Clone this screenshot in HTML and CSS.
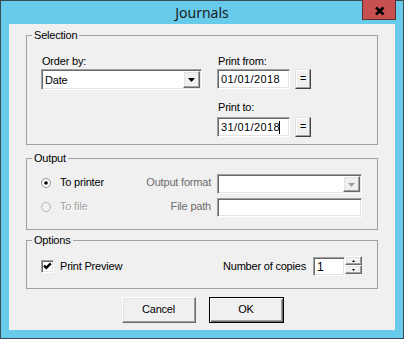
FILE: index.html
```html
<!DOCTYPE html>
<html>
<head>
<meta charset="utf-8">
<link rel="stylesheet" href="styles.css">
</head>
<body>
<div class="window">
  <div class="titlebar">
    <span class="title">Journals</span>
    <div class="close">
      <svg width="34" height="20" viewBox="0 0 34 20"><path d="M14 8.5 L21.5 15.5 M21.5 8.5 L14 15.5" stroke="#000" stroke-width="2.6" fill="none"/></svg>
    </div>
  </div>
  <div class="client">
    <div class="group group-sel">
      <div class="gtitle">Selection</div>
      <div class="sel-body">
        <div class="col">
          <div class="lbl">Order by:</div>
          <div class="combo combo-order">
            <span class="cval">Date</span>
            <span class="ddbtn"><svg width="7" height="4" viewBox="0 0 7 4"><path d="M0 0 H7 L3.5 4 Z" fill="#000"/></svg></span>
          </div>
        </div>
        <div class="col">
          <div class="lbl">Print from:</div>
          <div class="daterow first">
            <div class="field date">01/01/2018</div>
            <div class="rbtn eq">=</div>
          </div>
          <div class="lbl lbl-to">Print to:</div>
          <div class="daterow second">
            <div class="field date">31/01/2018<span class="caret"></span></div>
            <div class="rbtn eq">=</div>
          </div>
        </div>
      </div>
    </div>

    <div class="group group-out">
      <div class="gtitle">Output</div>
      <div class="out-body">
        <div class="radio-cell">
          <svg class="radio" width="12" height="12" viewBox="0 0 12 12"><circle cx="5" cy="6" r="4.5" fill="#fff" stroke="#8c8c8c"/><circle cx="5" cy="6" r="1.8" fill="#000"/></svg>
          <span>To printer</span>
        </div>
        <div class="olabel">Output format</div>
        <div class="combo combo-fmt">
          <span class="cval"></span>
          <span class="ddbtn"><svg width="7" height="4" viewBox="0 0 7 4"><path d="M0 0 H7 L3.5 4 Z" fill="#a0a0a0"/></svg></span>
        </div>
        <div class="radio-cell disabled">
          <svg class="radio" width="12" height="12" viewBox="0 0 12 12"><circle cx="5" cy="6" r="4.5" fill="#f0f0f0" stroke="#b4b4b4"/></svg>
          <span>To file</span>
        </div>
        <div class="olabel">File path</div>
        <div class="field path"></div>
      </div>
    </div>

    <div class="group group-opt">
      <div class="gtitle">Options</div>
      <div class="opt-body">
        <span class="check">
          <svg width="9" height="9" viewBox="0 0 9 9"><polyline points="1,3.6 3.3,5.9 7.8,1.4" fill="none" stroke="#000" stroke-width="2.4"/></svg>
        </span>
        <span class="chk-label">Print Preview</span>
        <span class="spacer"></span>
        <span class="copies-label">Number of copies</span>
        <div class="field spin-field">1</div>
        <div class="spin">
          <div class="spin-btn"><svg width="3" height="2" viewBox="0 0 3 2"><path d="M1.5 0 L3 2 H0 Z" fill="#000"/></svg></div>
          <div class="spin-btn"><svg width="3" height="2" viewBox="0 0 3 2"><path d="M0 0 H3 L1.5 2 Z" fill="#000"/></svg></div>
        </div>
      </div>
    </div>

    <div class="buttons">
      <div class="pbtn cancel">Cancel</div>
      <div class="pbtn ok">OK</div>
    </div>
  </div>
</div>
</body>
</html>
```

FILE: styles.css
```css
* { box-sizing: border-box; }
html, body { margin: 0; padding: 0; }
body {
  width: 404px;
  height: 339px;
  overflow: hidden;
  font-family: "Liberation Sans", Arial, sans-serif;
  font-size: 11px;
  line-height: 13px;
  letter-spacing: -0.2px;
  color: #000;
}
.window {
  width: 404px;
  height: 339px;
  border: 1px solid #3a4a52;
  background: #68cbea;
}
.titlebar {
  position: relative;
  height: 23px;
  display: flex;
  justify-content: center;
}
.title {
  font-family: "Noto Sans", sans-serif;
  font-size: 14px;
  line-height: 23px;
  letter-spacing: 0;
  color: #1a1a1a;
}
.close {
  position: absolute;
  top: -1px;
  right: 7px;
  width: 34px;
  height: 20px;
  background: #c75050;
  border: 1px solid #5e2e2e;
  border-top: none;
}
.close svg { display: block; margin: -1px 0 0 -1px; }
.client {
  margin: 0 8px;
  height: 306px;
  background: #f0f0f0;
  padding: 11px 17px 0 17px;
}
.group {
  border: 1px solid #a0a0a0;
  padding: 0 15px 0 14px;
}
.gtitle {
  width: fit-content;
  height: 13px;
  margin: -7px 0 0 -9px;
  padding: 0 2px;
  background: #f0f0f0;
  white-space: nowrap;
}
.group-sel { padding-bottom: 7px; }
.sel-body {
  padding-top: 13px;
  display: grid;
  grid-template-columns: 161px auto;
  column-gap: 15px;
  align-items: start;
}
.lbl { height: 13px; padding-left: 1px; white-space: nowrap; }
.lbl-to { margin-top: 12px; }
.daterow { display: flex; gap: 5px; }
.daterow.first { margin-top: 1px; }
.daterow.second { margin-top: 3px; }

.field {
  background: #fff;
  border: 1px solid;
  border-color: #a0a0a0 #fff #fff #a0a0a0;
  box-shadow: inset 1px 1px #696969, inset -1px -1px #e3e3e3;
  white-space: nowrap;
}
.date {
  width: 73px;
  height: 20px;
  padding: 3px 0 0 3px;
  letter-spacing: 0.4px;
}
.caret {
  display: inline-block;
  width: 1px;
  height: 13px;
  background: #000;
  vertical-align: top;
  margin-left: -1px;
}
.rbtn, .spin-btn, .ddbtn {
  background: #f0f0f0;
  border: 1px solid;
  border-color: #fff #696969 #696969 #fff;
  box-shadow: inset -1px -1px #a0a0a0, inset 1px 1px #e3e3e3;
}
.eq {
  width: 16px;
  height: 20px;
  text-align: center;
  line-height: 17px;
  border-color: #e3e3e3 #404040 #404040 #e3e3e3;
  box-shadow: inset -1px -1px #a0a0a0, inset 1px 1px #fff;
}

.combo {
  display: flex;
  align-items: stretch;
  background: #fff;
  border: 1px solid;
  border-color: #a0a0a0 #fff #fff #a0a0a0;
  box-shadow: inset 1px 1px #696969, inset -1px -1px #e3e3e3;
  padding: 1px;
}
.combo-order { width: 161px; height: 21px; margin-top: 1px; }
.cval { flex: 1; padding: 3px 0 0 2px; }
.ddbtn {
  width: 17px;
  display: flex;
  align-items: center;
  justify-content: center;
}
.ddbtn svg { display: block; margin-top: 1px; }

.group-out { margin-top: 13px; padding-bottom: 12px; }
.out-body {
  padding-top: 9px;
  display: grid;
  grid-template-columns: 100px 70px 151px;
  grid-template-rows: 20px 19px;
  column-gap: 0;
  row-gap: 4px;
}
.out-body .combo-fmt, .out-body .path { margin-left: 6px; }
.combo-fmt { height: 20px; }
.path { height: 19px; }
.radio-cell {
  display: flex;
  align-items: center;
  height: 13px;
  margin-top: 2px;
  white-space: nowrap;
}
.radio { display: block; margin-right: 7px; }
.radio-cell.disabled { color: #a0a0a0; text-shadow: 1px 1px #fff; }
.olabel {
  text-align: right;
  color: #6d6d6d;
  margin-top: 2px;
  white-space: nowrap;
}

.group-opt { margin-top: 10px; padding-bottom: 12px; }
.opt-body {
  padding-top: 9px;
  display: flex;
  align-items: center;
  height: 29px;
}
.check {
  width: 13px;
  height: 13px;
  background: #fff;
  border: 1px solid;
  border-color: #a0a0a0 #fff #fff #a0a0a0;
  box-shadow: inset 1px 1px #696969, inset -1px -1px #e3e3e3;
  padding: 1px;
  margin-top: 1px;
}
.check svg { display: block; }
.chk-label { margin-left: 6px; }
.spacer { flex: 1; }
.copies-label { margin-right: 7px; }
.spin-field {
  width: 32px;
  height: 19px;
  padding: 3px 0 0 3px;
  font-size: 12px;
  align-self: flex-start;
  margin-top: 1px;
}
.spin {
  width: 17px;
  height: 18px;
  display: flex;
  flex-direction: column;
  align-self: flex-start;
}
.spin-btn {
  height: 9px;
  display: flex;
  align-items: center;
  justify-content: center;
}
.spin-btn svg { display: block; }

.buttons {
  display: flex;
  justify-content: center;
  gap: 13px;
  margin-top: 8px;
  padding-left: 1px;
}
.pbtn {
  height: 26px;
  text-align: center;
  line-height: 23px;
  background: #f0f0f0;
}
.cancel {
  width: 74px;
  border: 1px solid;
  border-color: #fff #696969 #696969 #fff;
  box-shadow: inset -1px -1px #a0a0a0, inset 1px 1px #e3e3e3;
}
.ok {
  width: 75px;
  border: 1px solid #000;
  box-shadow: inset 1px 1px #fff, inset -1px -1px #696969, inset -2px -2px #a0a0a0;
}
```
